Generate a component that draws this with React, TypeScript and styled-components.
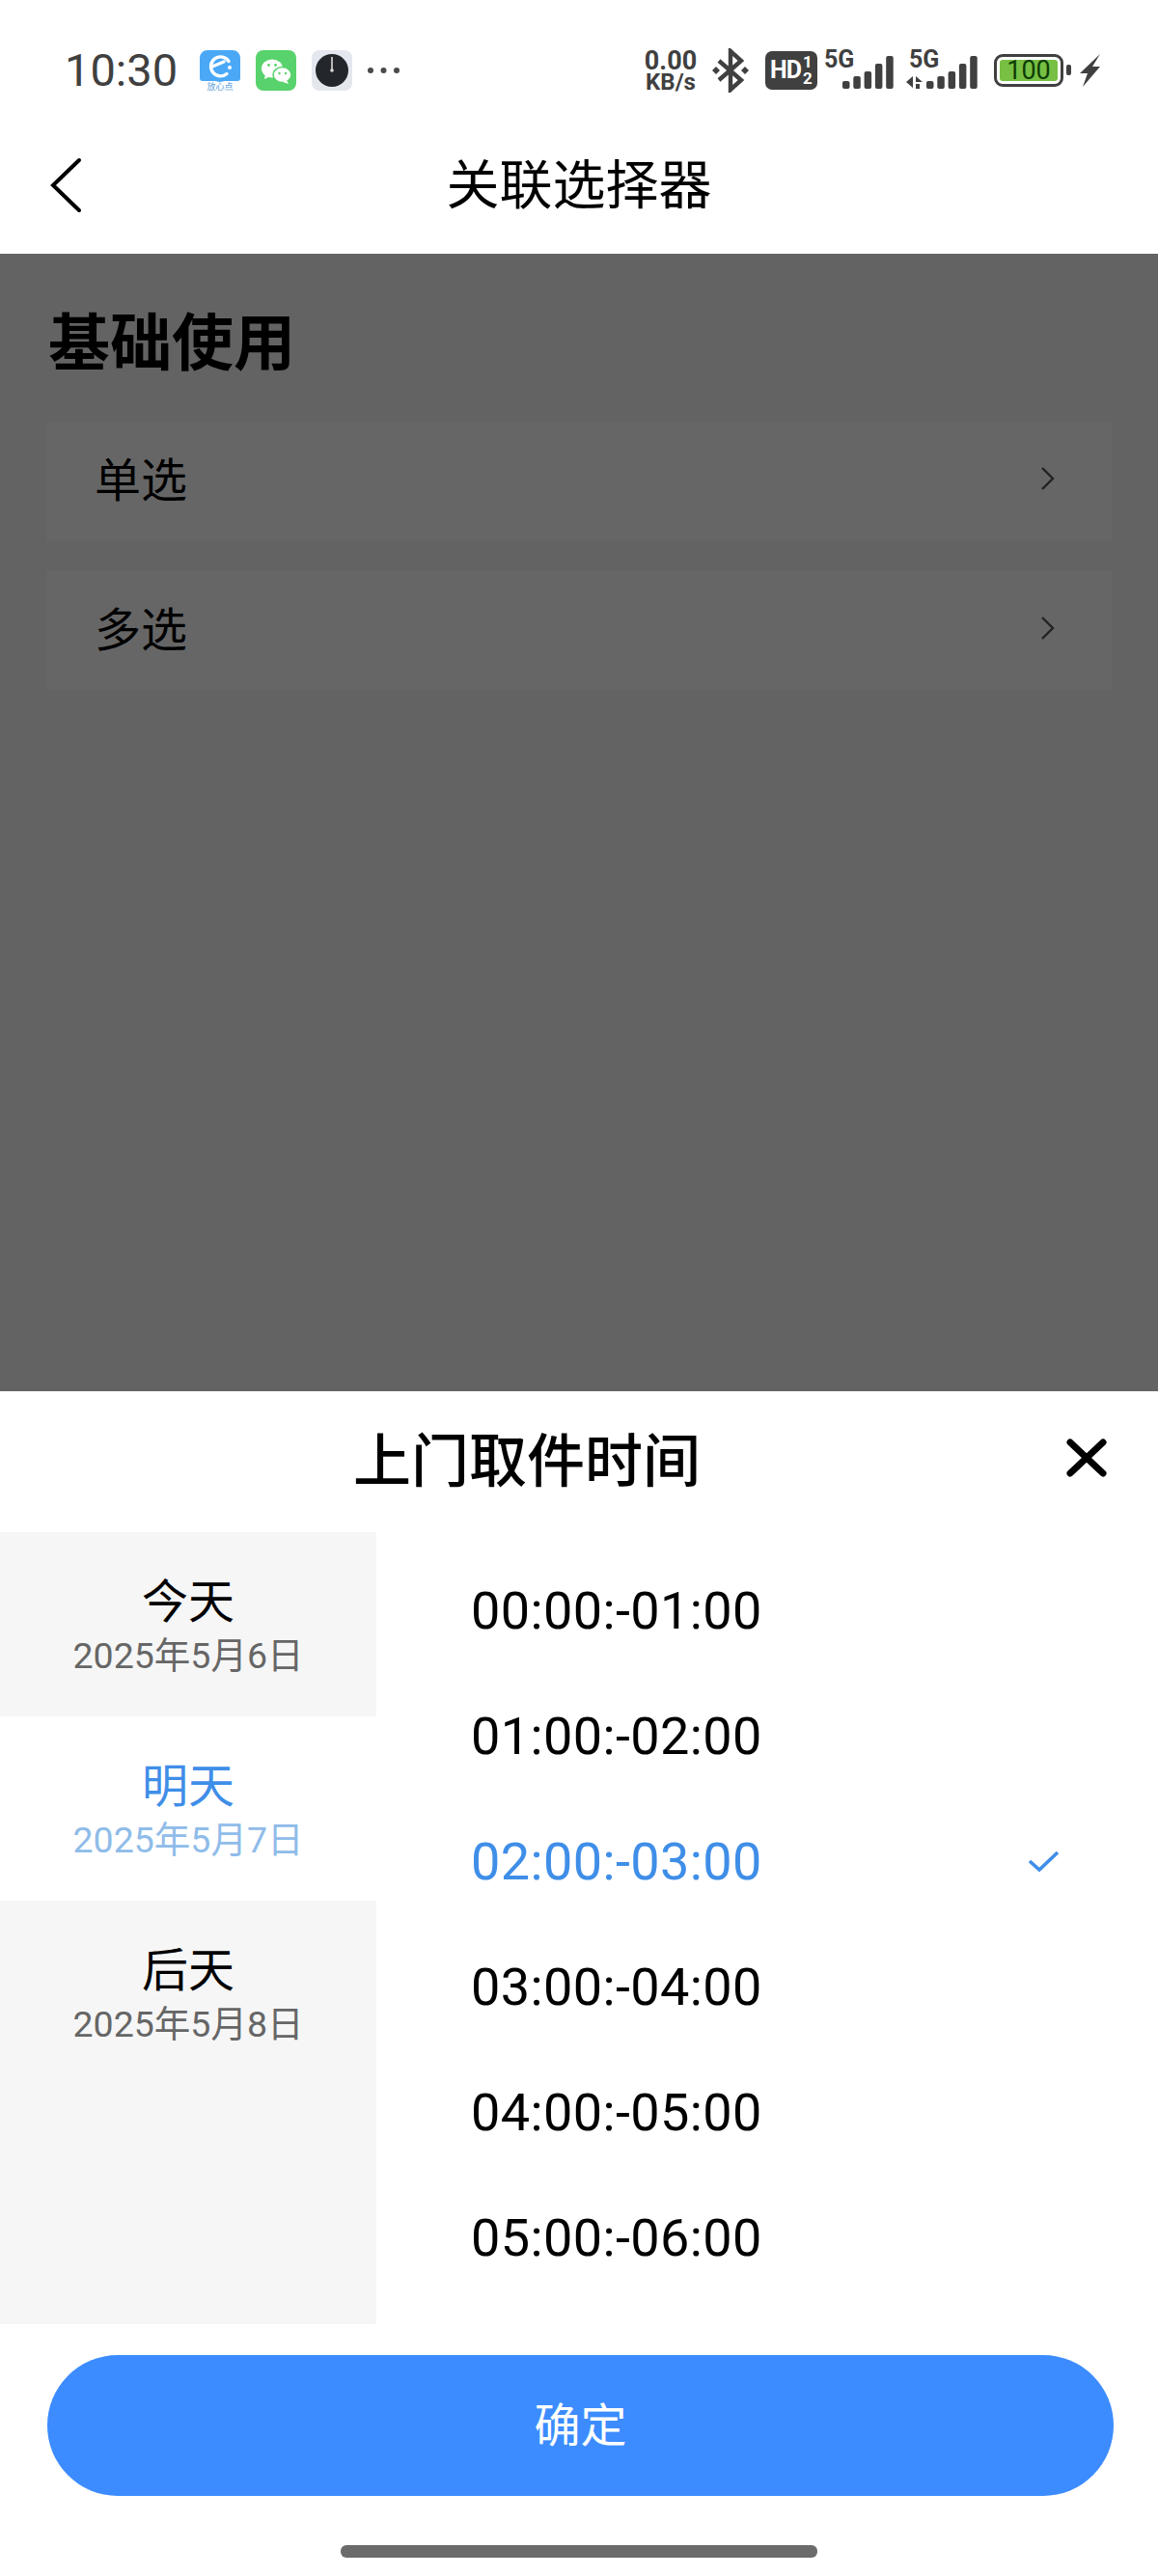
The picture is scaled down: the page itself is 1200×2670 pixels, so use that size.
import React, {FC} from 'react';
import styled, {createGlobalStyle} from 'styled-components';

const GlobalStyle = createGlobalStyle`
    html, body {
        margin: 0;
        padding: 0;
        background: #ffffff;
    }
    * {
        box-sizing: border-box;
    }
`;

const FONT = 'Roboto, "Noto Sans CJK SC", sans-serif';

const Page = styled.div`
    width: 1200px;
    height: 2670px;
    display: flex;
    flex-direction: column;
    font-family: ${FONT};
    color: #000000;
    overflow: hidden;
`;

const StatusBar = styled.div`
    height: 117px;
    padding: 50px 60px 22px 67px;
    display: flex;
    align-items: center;
    background: #ffffff;
`;

const Clock = styled.span`
    font-size: 47px;
    line-height: 45px;
    color: #404040;
    margin-right: 23px;
`;

const AppIcons = styled.div`
    display: flex;
    align-items: center;
    gap: 16px;
`;

const Spacer = styled.div`
    flex: 1;
`;

const AppIconBox = styled.div`
    position: relative;
    width: 42px;
    height: 42px;
`;

const AppIconCaption = styled.span`
    position: absolute;
    left: 0;
    right: 0;
    bottom: -1px;
    text-align: center;
    font-size: 9px;
    line-height: 10px;
    color: #5a9bd8;
`;

const StatusIcons = styled.div`
    display: flex;
    align-items: center;
`;

const NetSpeed = styled.div`
    width: 56px;
    margin-right: 13px;
    display: flex;
    flex-direction: column;
    align-items: center;
    font-weight: 700;
    color: #404040;
`;

const NetValue = styled.span`
    font-size: 27px;
    line-height: 24px;
`;

const NetUnit = styled.span`
    font-size: 24px;
    line-height: 20px;
`;

const HdBadge = styled.div`
    width: 54px;
    height: 40px;
    margin: 0 7px 0 15px;
    padding-left: 5px;
    border-radius: 7px;
    background: #404040;
    color: #ffffff;
    display: flex;
    align-items: center;
    font-weight: 700;
`;

const HdText = styled.span`
    font-size: 25px;
    letter-spacing: -1px;
`;

const HdLines = styled.span`
    display: flex;
    flex-direction: column;
    margin-left: 2px;
    font-size: 17px;
    line-height: 17px;
`;

const SignalBox = styled.div<{$width: number; $margin: number}>`
    position: relative;
    width: ${(p) => p.$width}px;
    height: 42px;
    margin-right: ${(p) => p.$margin}px;
`;

const SignalLabel = styled.span<{$left: number}>`
    position: absolute;
    left: ${(p) => p.$left}px;
    top: -1px;
    font-size: 25px;
    line-height: 22px;
    font-weight: 700;
    color: #404040;
`;

const DataArrows = styled.svg`
    position: absolute;
    left: 0;
    top: 0;
`;

const Battery = styled.div`
    width: 72px;
    height: 34px;
    padding: 3px;
    border: 3px solid #404040;
    border-radius: 9px;
    display: flex;
`;

const BatteryFill = styled.div`
    flex: 1;
    border-radius: 3px;
    background: #77c043;
    color: #0e3d05;
    font-size: 27px;
    line-height: 22px;
    text-align: center;
`;

const BatteryCap = styled.div`
    width: 5px;
    height: 11px;
    margin: 0 9px 0 3px;
    border-radius: 2px;
    background: #404040;
`;

const NavBar = styled.div`
    position: relative;
    height: 146px;
    display: flex;
    align-items: center;
    justify-content: center;
    background: #ffffff;
`;

const BackIcon = styled.svg`
    position: absolute;
    left: 50px;
    top: 46px;
`;

const NavTitle = styled.h1`
    margin: 4px 0 0;
    font-size: 55px;
    line-height: 70px;
    font-weight: 400;
`;

const Content = styled.div`
    flex: 1;
    padding: 51px 48px 0;
    background: #636363;
`;

const Heading = styled.h2`
    margin: 0 0 37px 2px;
    font-size: 64px;
    line-height: 86px;
    font-weight: 700;
`;

const MenuList = styled.div`
    display: flex;
    flex-direction: column;
    gap: 32px;
`;

const MenuRow = styled.div`
    height: 123px;
    padding: 0 58px 0 50px;
    display: flex;
    align-items: center;
    justify-content: space-between;
    background: #666666;
    font-size: 48px;
`;

const MenuLabel = styled.span`
    margin-bottom: 10px;
`;

const ChevronIcon = styled.svg`
    margin-bottom: 6px;
`;

const Sheet = styled.div`
    flex: none;
    height: 1228px;
    display: flex;
    flex-direction: column;
    background: #ffffff;
`;

const SheetHeader = styled.div`
    height: 146px;
    padding-bottom: 4px;
    display: flex;
    align-items: center;
`;

const SheetTitle = styled.h3`
    flex: 1;
    margin: 6px 0 0;
    text-align: center;
    font-size: 60px;
    line-height: 80px;
    font-weight: 500;
`;

const CloseButton = styled.div`
    width: 108px;
    padding: 0 0 4px 13px;
    display: flex;
`;

const Picker = styled.div`
    height: 821px;
    display: flex;
`;

const DayColumn = styled.div`
    width: 390px;
    background: #f6f6f6;
`;

const DayItem = styled.div<{$active?: boolean}>`
    height: 191px;
    padding-top: 44px;
    text-align: center;
    background: ${(p) => (p.$active ? '#ffffff' : 'transparent')};
`;

const DayName = styled.div<{$active?: boolean}>`
    font-size: 48px;
    line-height: 58px;
    color: ${(p) => (p.$active ? '#3f8ee8' : '#000000')};
`;

const DayDate = styled.div<{$active?: boolean}>`
    margin-top: 2px;
    font-size: 37.5px;
    line-height: 48px;
    color: ${(p) => (p.$active ? '#8fbce9' : '#666666')};
`;

const TimeColumn = styled.div`
    flex: 1;
    padding: 16px 102px 0 98px;
`;

const TimeRow = styled.div<{$active?: boolean}>`
    height: 130px;
    display: flex;
    align-items: center;
    justify-content: space-between;
    font-size: 54px;
    letter-spacing: 0.4px;
    color: ${(p) => (p.$active ? '#3f8ee8' : '#000000')};
`;

const ConfirmButton = styled.button`
    display: block;
    height: 146px;
    margin: 32px 46px 0 49px;
    padding: 0 0 8px;
    border: none;
    border-radius: 73px;
    background: #3c8cff;
    color: #ffffff;
    font-family: ${FONT};
    font-size: 48px;
`;

const HomeBar = styled.div`
    width: 494px;
    height: 13px;
    margin: 51px auto 0;
    border-radius: 6px;
    background: #6b6b6b;
`;

const Chevron: FC = () => (
    <ChevronIcon
        width='16'
        height='24'
        viewBox='0 0 16 24'
        fill='none'
        stroke='#222222'
        strokeWidth='2.4'
    >
        <path d='M2 1l11 11L2 23'/>
    </ChevronIcon>
);

const ElemeIcon: FC = () => (
    <AppIconBox>
        <svg
            width='42'
            height='42'
            viewBox='0 0 42 42'
        >
            <path
                d='M8 0h26a8 8 0 0 1 8 8v21a3 3 0 0 1-3 3H26l-5 1-5-1H3a3 3 0 0 1-3-3V8a8 8 0 0 1 8-8z'
                fill='#4aa8f7'
            />
            <path
                d='M30 11.5a10 10 0 1 0-2 13'
                fill='none'
                stroke='#ffffff'
                strokeWidth='3.4'
                strokeLinecap='round'
            />
            <path
                d='M13 17l12-5'
                fill='none'
                stroke='#ffffff'
                strokeWidth='3.4'
                strokeLinecap='round'
            />
            <circle
                cx='31'
                cy='18'
                r='2'
                fill='#ffffff'
            />
        </svg>
        <AppIconCaption>{'放心点'}</AppIconCaption>
    </AppIconBox>
);

const WechatIcon: FC = () => (
    <svg
        width='42'
        height='42'
        viewBox='0 0 42 42'
    >
        <rect
            width='42'
            height='42'
            rx='8'
            fill='#58d26c'
        />
        <ellipse
            cx='17'
            cy='19'
            rx='11'
            ry='9.5'
            fill='#ffffff'
        />
        <path
            d='M10 25l-1 5 6-3z'
            fill='#ffffff'
        />
        <ellipse
            cx='27.5'
            cy='25.5'
            rx='9.5'
            ry='8'
            stroke='#58d26c'
            strokeWidth='1.5'
            fill='#ffffff'
        />
        <path
            d='M32 31l2 4-6-2z'
            fill='#ffffff'
        />
        <circle
            cx='13.5'
            cy='15.5'
            r='1.4'
            fill='#58d26c'
        />
        <circle
            cx='20.5'
            cy='15.5'
            r='1.4'
            fill='#58d26c'
        />
        <circle
            cx='24.5'
            cy='24'
            r='1.2'
            fill='#58d26c'
        />
        <circle
            cx='31'
            cy='24'
            r='1.2'
            fill='#58d26c'
        />
    </svg>
);

const ClockIcon: FC = () => (
    <svg
        width='42'
        height='42'
        viewBox='0 0 42 42'
    >
        <rect
            width='42'
            height='42'
            rx='8'
            fill='#e4e7ee'
        />
        <circle
            cx='21'
            cy='21'
            r='17'
            fill='#23262b'
        />
        <path
            d='M21 7v13'
            stroke='#dddddd'
            strokeWidth='1.6'
        />
        <circle
            cx='21'
            cy='21'
            r='1.8'
            fill='#dddddd'
        />
    </svg>
);

const MoreDots: FC = () => (
    <svg
        width='33'
        height='8'
        viewBox='0 0 33 8'
    >
        <circle
            cx='3'
            cy='4'
            r='3'
            fill='#4a4a4a'
        />
        <circle
            cx='16.5'
            cy='4'
            r='3'
            fill='#4a4a4a'
        />
        <circle
            cx='30'
            cy='4'
            r='3'
            fill='#4a4a4a'
        />
    </svg>
);

const BluetoothIcon: FC = () => (
    <svg
        width='42'
        height='46'
        viewBox='0 0 42 46'
        fill='none'
        stroke='#404040'
        strokeWidth='4.4'
    >
        <path d='M9 13l23 20-11 10V3l11 10L9 33'/>
        <path
            d='M2 23l4-4 4 4-4 4zM32 23l4-4 4 4-4 4z'
            fill='#404040'
            stroke='none'
        />
    </svg>
);

const BAR_HEIGHTS = [8, 13, 18, 26, 34];

const SignalBars: FC<{x: number; width: number}> = ({x, width}) => (
    <svg
        width={width}
        height='42'
        viewBox={`0 0 ${width} 42`}
        fill='#404040'
    >
        {BAR_HEIGHTS.map((height, index) => (
            <rect
                key={height}
                x={x + (index * 11.3)}
                y={40 - height}
                width='7.5'
                height={height}
                rx='2'
            />
        ))}
    </svg>
);

const days = [
    {name: '今天', date: '2025年5月6日'},
    {name: '明天', date: '2025年5月7日', active: true},
    {name: '后天', date: '2025年5月8日'},
];

const times = [
    '00:00:-01:00',
    '01:00:-02:00',
    '02:00:-03:00',
    '03:00:-04:00',
    '04:00:-05:00',
    '05:00:-06:00',
];

const App: FC = () => {
    return (
        <Page>
            <GlobalStyle/>
            <StatusBar>
                <Clock>{'10:30'}</Clock>
                <AppIcons>
                    <ElemeIcon/>
                    <WechatIcon/>
                    <ClockIcon/>
                    <MoreDots/>
                </AppIcons>
                <Spacer/>
                <StatusIcons>
                    <NetSpeed>
                        <NetValue>{'0.00'}</NetValue>
                        <NetUnit>{'KB/s'}</NetUnit>
                    </NetSpeed>
                    <BluetoothIcon/>
                    <HdBadge>
                        <HdText>{'HD'}</HdText>
                        <HdLines>
                            <span>{'1'}</span>
                            <span>{'2'}</span>
                        </HdLines>
                    </HdBadge>
                    <SignalBox
                        $width={72}
                        $margin={13}
                    >
                        <SignalLabel $left={0}>{'5G'}</SignalLabel>
                        <SignalBars
                            x={19}
                            width={72}
                        />
                    </SignalBox>
                    <SignalBox
                        $width={74}
                        $margin={17}
                    >
                        <SignalLabel $left={3}>{'5G'}</SignalLabel>
                        <SignalBars
                            x={21}
                            width={74}
                        />
                        <DataArrows
                            width='20'
                            height='42'
                            viewBox='0 0 20 42'
                            fill='#404040'
                        >
                            <path d='M7 27v12l-7-6zM10 27l7 6h-7zM10 35h4v5h-4z'/>
                        </DataArrows>
                    </SignalBox>
                    <Battery>
                        <BatteryFill>{'100'}</BatteryFill>
                    </Battery>
                    <BatteryCap/>
                    <svg
                        width='21'
                        height='34'
                        viewBox='0 0 21 34'
                        fill='#404040'
                    >
                        <path d='M21 0L0 20h8L3 34l18-21h-8z'/>
                    </svg>
                </StatusIcons>
            </StatusBar>
            <NavBar>
                <BackIcon
                    width='36'
                    height='58'
                    viewBox='0 0 36 58'
                    fill='none'
                    stroke='#000000'
                    strokeWidth='4'
                    strokeLinecap='round'
                >
                    <path d='M32 3L5 29l27 26'/>
                </BackIcon>
                <NavTitle>{'关联选择器'}</NavTitle>
            </NavBar>
            <Content>
                <Heading>{'基础使用'}</Heading>
                <MenuList>
                    <MenuRow>
                        <MenuLabel>{'单选'}</MenuLabel>
                        <Chevron/>
                    </MenuRow>
                    <MenuRow>
                        <MenuLabel>{'多选'}</MenuLabel>
                        <Chevron/>
                    </MenuRow>
                </MenuList>
            </Content>
            <Sheet>
                <SheetHeader>
                    <SheetTitle>{'上门取件时间'}</SheetTitle>
                    <CloseButton>
                        <svg
                            width='42'
                            height='40'
                            viewBox='0 0 42 40'
                            stroke='#000000'
                            strokeWidth='7'
                            strokeLinecap='round'
                        >
                            <path d='M4 4l34 32M38 4L4 36'/>
                        </svg>
                    </CloseButton>
                </SheetHeader>
                <Picker>
                    <DayColumn>
                        {days.map((day) => (
                            <DayItem
                                key={day.name}
                                $active={day.active}
                            >
                                <DayName $active={day.active}>{day.name}</DayName>
                                <DayDate $active={day.active}>{day.date}</DayDate>
                            </DayItem>
                        ))}
                    </DayColumn>
                    <TimeColumn>
                        {times.map((time, index) => (
                            <TimeRow
                                key={time}
                                $active={index === 2}
                            >
                                {time}
                                {index === 2 && (
                                    <svg
                                        width='33'
                                        height='23'
                                        viewBox='0 0 33 23'
                                        fill='none'
                                        stroke='#3f8ee8'
                                        strokeWidth='3.6'
                                    >
                                        <path d='M2 11l10 9L31 2'/>
                                    </svg>
                                )}
                            </TimeRow>
                        ))}
                    </TimeColumn>
                </Picker>
                <ConfirmButton>{'确定'}</ConfirmButton>
                <HomeBar/>
            </Sheet>
        </Page>
    );
};

export default App;
